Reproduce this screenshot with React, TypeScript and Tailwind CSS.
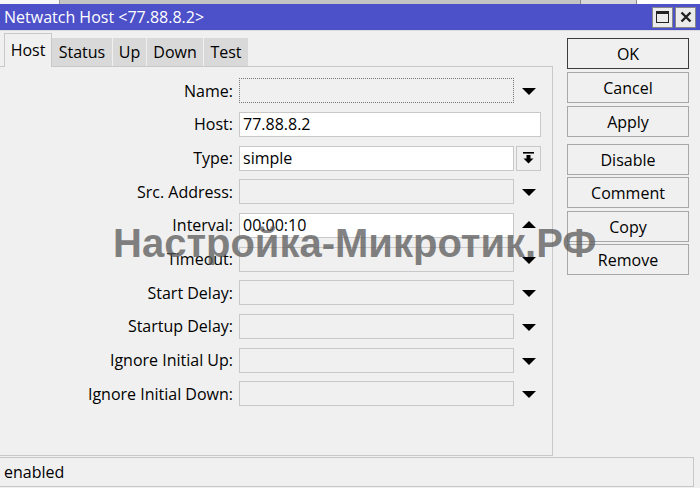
import React from "react";

const Down = () => (
  <svg width="14" height="9" viewBox="0 0 14 9"><polygon points="0,1 14,1 7,8" fill="#000" /></svg>
);
const Up = () => (
  <svg width="14" height="9" viewBox="0 0 14 9"><polygon points="0,8 14,8 7,1" fill="#000" /></svg>
);

type Row = { label: string; kind: "name" | "host" | "type" | "empty" | "interval"; value?: string; icon?: "down" | "up" | "none" };

const rows: Row[] = [
  { label: "Name:", kind: "name", icon: "down" },
  { label: "Host:", kind: "host", value: "77.88.8.2" },
  { label: "Type:", kind: "type", value: "simple" },
  { label: "Src. Address:", kind: "empty", icon: "down" },
  { label: "Interval:", kind: "interval", value: "00:00:10", icon: "up" },
  { label: "Timeout:", kind: "empty", icon: "down" },
  { label: "Start Delay:", kind: "empty", icon: "down" },
  { label: "Startup Delay:", kind: "empty", icon: "down" },
  { label: "Ignore Initial Up:", kind: "empty", icon: "down" },
  { label: "Ignore Initial Down:", kind: "empty", icon: "down" },
];

function Field({ r }: { r: Row }) {
  let input: React.ReactNode;
  if (r.kind === "name") {
    input = <div className="w-[275px] h-[25px] bg-[#f0f0f0] border border-dotted border-[#777]" />;
  } else if (r.kind === "host") {
    input = (
      <div className="w-[302px] h-[25px] bg-white border border-[#c8c8c8] flex items-center pl-[3px]">{r.value}</div>
    );
  } else if (r.kind === "type") {
    input = (
      <div className="flex">
        <div className="w-[275px] h-[25px] bg-white border border-[#c8c8c8] flex items-center pl-[3px]">{r.value}</div>
        <div className="ml-[2px] w-[25px] h-[25px] bg-[#f0f0f0] border border-[#c8c8c8] flex items-center justify-center">
          <svg width="11" height="12" viewBox="0 0 11 12">
            <rect x="0" y="0" width="11" height="1.6" fill="#000" />
            <rect x="3.5" y="3" width="4" height="4" fill="#000" />
            <polygon points="0.5,6.5 10.5,6.5 5.5,11.5" fill="#000" />
          </svg>
        </div>
      </div>
    );
  } else if (r.kind === "interval") {
    input = (
      <div className="w-[275px] h-[25px] bg-white border border-[#c8c8c8] flex items-center pl-[3px]">{r.value}</div>
    );
  } else {
    input = <div className="w-[275px] h-[25px] bg-[#f0f0f0] border border-[#c8c8c8]" />;
  }
  return (
    <div className="flex items-center h-[33.67px]">
      <div className="w-[233px] text-right">{r.label}</div>
      <div className="ml-[6px] flex items-center">
        {input}
        {r.icon === "down" && (
          <div className="w-[29px] flex justify-center pt-[2px]"><Down /></div>
        )}
        {r.icon === "up" && (
          <div className="w-[29px] flex justify-center mb-[2px]"><Up /></div>
        )}
      </div>
    </div>
  );
}

const Btn = ({ t, dark }: { t: string; dark?: boolean }) => (
  <div
    className={`w-[122px] h-[31px] flex items-center justify-center bg-[#f0f0f0] border ${dark ? "border-[#3c3c3c]" : "border-[#a8a8a8]"}`}
  >
    {t}
  </div>
);

export default function App() {
  return (
    <div
      className="w-[700px] h-[488px] bg-[#f0f0f0] relative overflow-hidden text-[16px] leading-[20px] text-black"
      style={{ fontFamily: '"Open Sans", "Liberation Sans", Arial, sans-serif' }}
    >
      {/* top strip */}
      <div className="h-[4px] flex">
        <div className="w-[60px] bg-[#f7f7f7] border-r border-[#999]" />
        <div className="w-[520px] bg-[#c4c4c4]" />
        <div className="w-[57px] bg-[#d8d8d8] border-x border-[#888]" />
        <div className="flex-1 bg-white" />
      </div>
      {/* title bar */}
      <div className="h-[26px] bg-[#4c50c9] flex items-center justify-between pl-[4px] pr-[4px]">
        <div className="text-white text-[16px] leading-none">Netwatch Host &lt;77.88.8.2&gt;</div>
        <div className="flex gap-[2px]">
          <div className="w-[21px] h-[21px] bg-[#ebebeb] border border-[#888] flex items-center justify-center">
            <div className="w-[13px] h-[12px] border-[1.5px] border-[#222] border-t-[3px]" />
          </div>
          <div className="w-[21px] h-[21px] bg-[#ebebeb] border border-[#888] flex items-center justify-center">
            <svg width="12" height="12" viewBox="0 0 12 12">
              <path d="M1.5 1.5 L10.5 10.5 M10.5 1.5 L1.5 10.5" stroke="#222" strokeWidth="2.4" />
            </svg>
          </div>
        </div>
      </div>
      <div className="border-t border-[#dcdcdc]" />
      {/* body */}
      <div className="flex h-[425px]">
        <div className="w-[553px] flex flex-col">
          <div className="h-[35px] flex items-end pl-[4px]">
            <div className="h-[34px] w-[48px] bg-[#f0f0f0] border-x border-t border-[#c8c8c8] flex items-center justify-center text-[16px] pb-[2px] relative top-[1px] z-10">
              Host
            </div>
            {[
              ["Status", 61],
              ["Up", 34],
              ["Down", 57],
              ["Test", 45],
            ].map(([t, w]) => (
              <div
                key={t as string}
                style={{ width: w as number }}
                className="h-[28px] bg-[#d9d9d9] border-r border-[#f0f0f0] flex items-center justify-center text-[16px]"
              >
                {t}
              </div>
            ))}
          </div>
          <div className="flex-1 border-t border-r border-b border-[#c8c8c8] pt-[7px]">
            {rows.map((r) => (
              <Field key={r.label} r={r} />
            ))}
          </div>
        </div>
        <div className="flex flex-col pl-[14px] pt-[7px]">
          <Btn t="OK" dark />
          <div className="h-[3px]" />
          <Btn t="Cancel" />
          <div className="h-[3px]" />
          <Btn t="Apply" />
          <div className="h-[7px]" />
          <Btn t="Disable" />
          <div className="h-[2px]" />
          <Btn t="Comment" />
          <div className="h-[3px]" />
          <Btn t="Copy" />
          <div className="h-[2px]" />
          <Btn t="Remove" />
        </div>
      </div>
      {/* status bar */}
      <div className="mt-[1px] w-[694px] h-[30px] border-t border-r border-b border-[#c8c8c8] flex items-center pl-[4px]">
        enabled
      </div>
      {/* watermark */}
      <div
        className="absolute left-[113px] top-[213px] text-[40px] leading-normal font-bold text-[#5a5a5a] opacity-75 whitespace-nowrap pointer-events-none"
        style={{ fontFamily: '"Liberation Sans", Arial, sans-serif' }}
      >
        Настройка-Микротик.РФ
      </div>
    </div>
  );
}
